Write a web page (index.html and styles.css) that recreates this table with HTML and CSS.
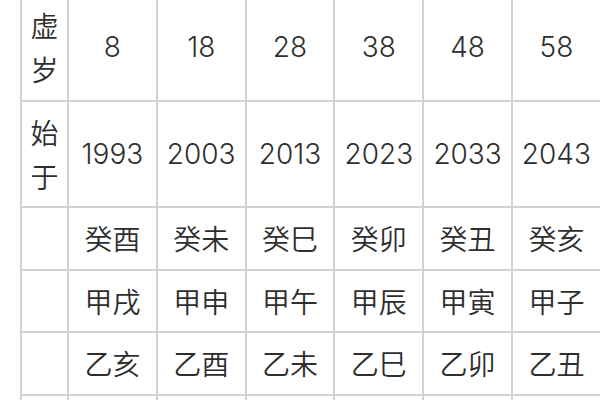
FILE: index.html
```html
<!DOCTYPE html>
<html lang="zh">
<head>
<meta charset="utf-8">
<title>大运表</title>
<link rel="stylesheet" href="styles.css">
</head>
<body>
<table class="luck">
  <colgroup>
    <col class="c-label">
    <col class="c-val"><col class="c-val"><col class="c-val"><col class="c-val"><col class="c-val"><col class="c-val">
  </colgroup>
  <tbody>
    <tr>
      <td class="label">虚<br>岁</td>
      <td class="num">8</td><td class="num">18</td><td class="num">28</td><td class="num">38</td><td class="num">48</td><td class="num">58</td>
    </tr>
    <tr>
      <td class="label">始<br>于</td>
      <td class="num">1993</td><td class="num">2003</td><td class="num">2013</td><td class="num">2023</td><td class="num">2033</td><td class="num">2043</td>
    </tr>
    <tr>
      <td class="label"></td>
      <td>癸酉</td><td>癸未</td><td>癸巳</td><td>癸卯</td><td>癸丑</td><td>癸亥</td>
    </tr>
    <tr>
      <td class="label"></td>
      <td>甲戌</td><td>甲申</td><td>甲午</td><td>甲辰</td><td>甲寅</td><td>甲子</td>
    </tr>
    <tr>
      <td class="label"></td>
      <td>乙亥</td><td>乙酉</td><td>乙未</td><td>乙巳</td><td>乙卯</td><td>乙丑</td>
    </tr>
    <tr>
      <td class="label"></td>
      <td></td><td></td><td></td><td></td><td></td><td></td>
    </tr>
  </tbody>
</table>
</body>
</html>
```
FILE: styles.css
```css
html, body {
  margin: 0;
  padding: 0;
  background: #ffffff;
  overflow: hidden;
  width: 600px;
  height: 400px;
}

.luck {
  border-collapse: collapse;
  table-layout: fixed;
  width: 580px;
  margin: -7px 0 0 20px;
  font-family: "Noto Sans CJK SC", "Noto Sans", sans-serif;
  font-size: 28px;
  font-weight: 350;
  color: #2e2e2e;
}

.c-label { width: 47px; }
.c-val { width: 88.8px; }

.luck td {
  border: 2px solid #d2d2d2;
  padding: 8.25px 0;
  height: 44px;
  line-height: 44px;
  text-align: center;
  vertical-align: middle;
  white-space: nowrap;
}

.luck td.num {
  font-family: Inter, "Noto Sans CJK SC", sans-serif;
  font-weight: 300;
}
```
